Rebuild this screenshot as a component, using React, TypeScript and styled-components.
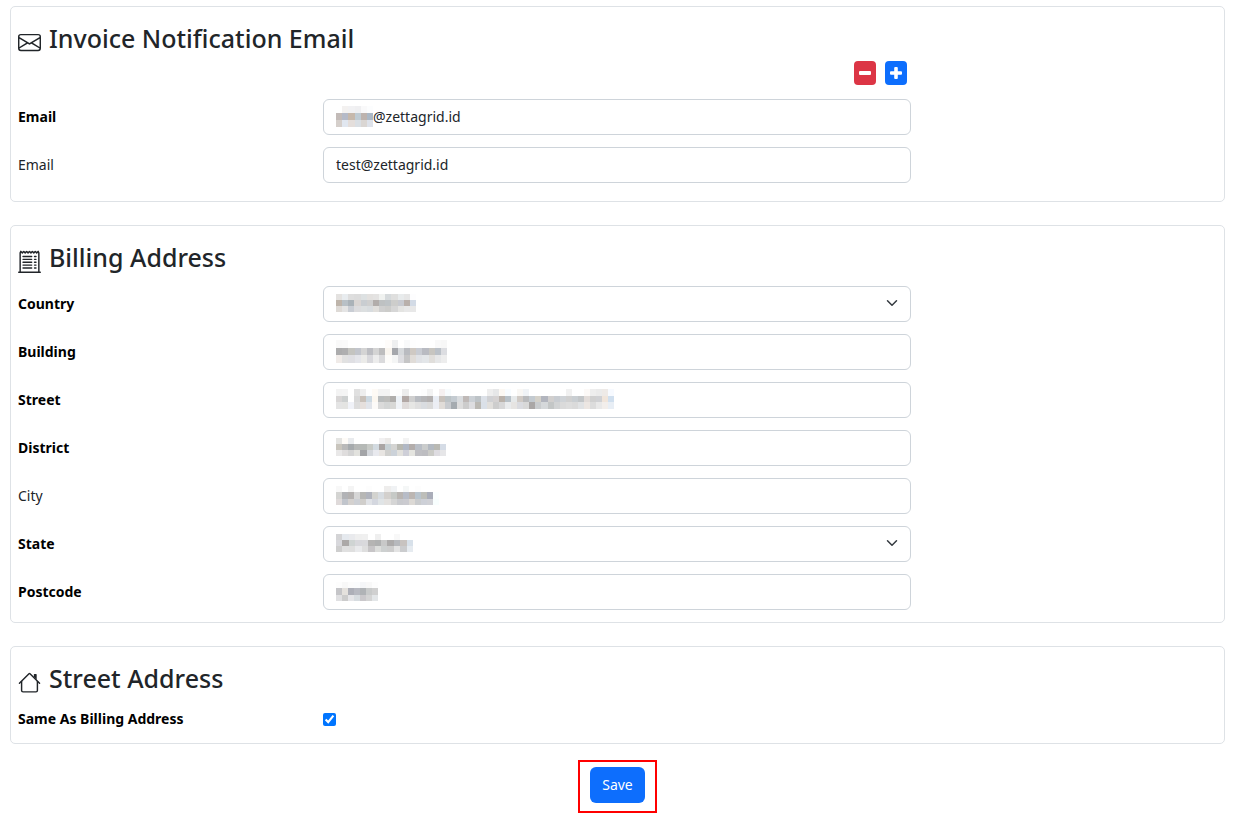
import React from "react";
import styled, { createGlobalStyle } from "styled-components";
import { BsEnvelope, BsReceiptCutoff } from "react-icons/bs";

const GlobalStyle = createGlobalStyle`
  *, *::before, *::after { box-sizing: border-box; }
  body {
    margin: 0;
    background: #fff;
    color: #212529;
    font-family: "Noto Sans", "Open Sans", sans-serif;
    font-size: 14px;
    line-height: 22px;
  }
`;

const Page = styled.form`
  display: flex;
  flex-direction: column;
  padding: 6px 11px 7px 10px;
`;

const Card = styled.section<{ $roomy?: boolean }>`
  padding: 14px 8px ${(p) => (p.$roomy ? 18 : 12)}px 7px;
  margin-bottom: 23px;
  border: 1px solid #dee2e6;
  border-radius: 5px;

  &:last-of-type { margin-bottom: 16px; }
`;

const Heading = styled.h3`
  display: flex;
  align-items: center;
  gap: 8px;
  margin: 0 0 6px;
  font-size: 25px;
  font-weight: 500;
  line-height: 34px;

  svg { flex: none; margin-top: 8px; }
`;

const Grid = styled.div`
  display: grid;
  grid-template-columns: repeat(12, minmax(0, 1fr));
  column-gap: 22px;
  align-items: center;
`;

const Actions = styled.div`
  grid-column: 4 / span 6;
  display: flex;
  justify-content: flex-end;
  gap: 9px;
  padding-right: 4px;
  margin-bottom: 8px;
`;

const IconButton = styled.button<{ $tone: string }>`
  display: flex;
  align-items: center;
  justify-content: center;
  width: 22px;
  height: 24px;
  padding: 0;
  border: 0;
  border-radius: 4px;
  background: ${(p) => p.$tone};
  color: #fff;
  cursor: pointer;
`;

const Fields = styled.div`
  display: flex;
  flex-direction: column;
  gap: 12px;
  padding-top: 6px;
`;

const Label = styled.label<{ $required?: boolean }>`
  grid-column: span 3;
  color: ${(p) => (p.$required ? "#000" : "#212529")};
  font-weight: ${(p) => (p.$required ? 700 : 400)};
`;

const Shell = styled.div`
  grid-column: span 6;
  display: flex;
  align-items: center;
  height: 36px;
  padding: 0 12px 2px;
  border: 1px solid #ced4da;
  border-radius: 6px;
  background: #fff;

  svg { flex: none; }
  &:focus-within { border-color: #86b7fe; }
`;

const TextInput = styled.input`
  flex: 1;
  min-width: 0;
  height: 100%;
  padding: 0;
  border: 0;
  outline: 0;
  background: transparent;
  color: inherit;
  font: inherit;
`;

const Select = styled.select`
  flex: 1;
  min-width: 0;
  height: 100%;
  padding: 0;
  border: 0;
  outline: 0;
  appearance: none;
  background: transparent;
  color: inherit;
  font: inherit;
`;

const CheckRow = styled(Grid)`
  min-height: 24px;
`;

const Checkbox = styled.input`
  width: 13px;
  height: 13px;
  margin: 0;
`;

const SaveFrame = styled.div`
  align-self: center;
  padding: 5px 10px 8px;
  border: 2px solid #f00;
`;

const SaveButton = styled.button`
  display: block;
  height: 36px;
  padding: 0 12px;
  border: 0;
  border-radius: 6px;
  background: #0d6efd;
  color: #fff;
  font: inherit;
  cursor: pointer;
`;

type MaskData = { width: number; height: number; rows: string[] };

/* Pixelated stand-in for a redacted value; each row lists its cell colours. */
const Mask = ({ width, height, rows }: MaskData) => {
  const cells = rows.map((r) => r.split(" "));
  const count = cells[0].length;
  return (
    <svg
      width={width}
      height={height}
      viewBox={`0 0 ${count} ${cells.length}`}
      preserveAspectRatio="none"
      shapeRendering="crispEdges"
      aria-hidden="true"
    >
      {cells.map((row, y) =>
        row.map((c, x) => <rect key={`${x}-${y}`} x={x} y={y} width="1" height="1" fill={`#${c}`} />)
      )}
    </svg>
  );
};

const Chevron = () => (
  <svg width="12" height="12" viewBox="0 0 16 16" fill="none" stroke="#343a40" strokeWidth="2" strokeLinecap="round" strokeLinejoin="round" aria-hidden="true">
    <path d="m2 5 6 6 6-6" />
  </svg>
);

const Minus = () => (
  <svg width="12" height="12" viewBox="0 0 12 12" fill="currentColor" aria-hidden="true">
    <rect x="0" y="4" width="12" height="4" rx="1" />
  </svg>
);

const Plus = () => (
  <svg width="12" height="12" viewBox="0 0 12 12" fill="currentColor" aria-hidden="true">
    <rect x="0" y="4.2" width="12" height="3.6" rx="1" />
    <rect x="4.2" y="0" width="3.6" height="12" rx="1" />
  </svg>
);

const House = () => (
  <svg width="23" height="23" viewBox="0 0 16 16" fill="currentColor" aria-hidden="true">
    <path fillRule="evenodd" d="M2 13.5V7h1v6.5a.5.5 0 0 0 .5.5h9a.5.5 0 0 0 .5-.5V7h1v6.5a1.5 1.5 0 0 1-1.5 1.5h-9A1.5 1.5 0 0 1 2 13.5zm11-11V6l-2-2V2.5a.5.5 0 0 1 .5-.5h1a.5.5 0 0 1 .5.5z" />
    <path fillRule="evenodd" d="M7.293 1.5a1 1 0 0 1 1.414 0l6.647 6.646a.5.5 0 0 1-.708.708L8 2.207 1.354 8.854a.5.5 0 1 1-.708-.708L7.293 1.5z" />
  </svg>
);

type FieldProps = {
  id: string;
  label: string;
  required?: boolean;
  select?: boolean;
  value?: string;
  mask?: MaskData;
};

const Field = ({ id, label, required, select, value = "", mask }: FieldProps) => (
  <Grid>
    <Label htmlFor={id} $required={required}>{label}</Label>
    <Shell>
      {mask && <Mask {...mask} />}
      {select ? <Select id={id} /> : <TextInput id={id} type="text" defaultValue={value} />}
      {select && <Chevron />}
    </Shell>
  </Grid>
);

const emailMask: MaskData = {
  width: 37,
  height: 21,
  rows: [
    "ffffff f3f1f0 f1f1f3 efeff1 f9f9fa fcfdfe",
    "c3bbb8 b5bac8 c6b8ab bfcbd3 bdb3ae abb8c6",
    "d5cfcb e1e7f0 e4dedb dadfe4 dad6d3 dee2ea",
  ],
};

const addressFields: FieldProps[] = [
  {
    id: "country", label: "Country", required: true, select: true,
    mask: {
      width: 80, height: 18,
      rows: [
        "e4e2e0 e8ecef dedede dcdcdc dde1e2 e3e1df e4e3e2 f0f2f0 d6dadc dfdfde e8ebec e6e6e6 fdfdfe",
        "beb4aa b8c0c6 aab2b8 d9d5d3 c9cdd1 cfcfcf b2adab bec1c2 bec3c6 cdcdcb c8cad0 b9b0ab d3dbe6",
        "dedad6 e4e4e4 c9cdd4 dcdcde dcdfe0 d8dcdf e1dfdc cfcfcf ccccca d6d6d6 e4e4e2 e8e8e8 e8e8e8",
      ],
    },
  },
  {
    id: "building", label: "Building", required: true,
    mask: {
      width: 111, height: 23,
      rows: [
        "f9f9f9 fafafa ffffff ffffff ffffff ffffff ffffff ffffff fefcfa eeeff0 ffffff f8f9fa fefefe ffffff ffffff ffffff f9f9f9 f7f7f7",
        "acacad afafb0 c4c4c0 c2c5cc d4d4d4 bcbdc2 d4d4d4 bdbdbe f9f5ef a5a7ac d5d8db b9bbc0 cfc9c3 c9ccd3 b9bbc2 c7c5c0 bbc1c8 dcdde1",
        "f0ebe8 e1e1e1 dfdfe3 e4e5ea ebebe9 d8d8dc ececec dadadc fdfcfa f4f5f5 dddde1 c5c5c6 e0dcd8 e0e2e6 e3e6e9 e0dedb e6e7e8 ededed",
      ],
    },
  },
  {
    id: "street", label: "Street", required: true,
    mask: {
      width: 278, height: 20,
      rows: [
        "f3f3f3 f4f4f4 ffffff e0e0e0 eeeeee fefefe fefaf5 f3f3f3 f3f3f3 fefefe fdfdfd ececec ffffff ffffff fdfdfd f2f2f2 ffffff f5f0f0 f7fbfd ffffff ffffff ffffff ffffff ffffff ffffff eeeeee e6e7e8 fcf8f3 f8fcff ffffff f9f7f4 f0f3f6 ffffff ffffff ffffff ffffff ffffff ffffff f1f1f1 ffffff ffffff fcf9f7 eeeeee ebebeb eeeae7 f7faff",
        "d8d6d6 cdd0d0 ffffff d8d8d8 c9c1ba cdd9e2 fcf7f0 b9bcbd bdbdbb b0aeac edf2f7 b2a8a5 cfcfcf b9bcc1 b6b6b8 b4b1b1 e9edf4 c8c2bc bcc3c6 c4cbd1 d9dcdf bfb9b7 cbd0d5 bdc3c7 dce1e8 d0d1d4 d5d2d2 bab2ab b8c1c8 e6e9ea d0cac5 b9babc c3cad0 d4d1c9 b2b5be d1cfce c8ccd1 cfd3d7 d0d0d0 c9ced2 c3c6c8 e2dcd9 d0d0d0 d0d1d4 f0e5db d0dfee",
        "e4e4e4 e4e4e2 f0f2f8 dddddd e5dfdc e1e4ea fcfaf8 dadada d3d5d5 d8d8d6 f0f3f7 dfdbda e6e6e4 dfdfdf d9dce0 dadada eceef4 e0dcd8 c8cbcf a5abb0 dddddd cccccc dddde0 bbb9b4 dae0e8 e1dfdc cdcdcd d7d7d8 e9ebed e6e4e2 dadbe0 d8d8d8 aaa7a6 c9ccce d5d8da c3c6c6 d1d3d4 dadada dddddd dadada e0e2e4 ece6e2 dcdcdc e8e8e8 f2eeeb e8eef5",
      ],
    },
  },
  {
    id: "district", label: "District", required: true,
    mask: {
      width: 110, height: 18,
      rows: [
        "e4e4e2 fefbf7 e9ebee ffffff ffffff ffffff ffffff f1f0f1 ebe9e7 ffffff ffffff f3f3f3 ffffff ffffff ffffff ffffff ffffff ffffff",
        "c9c5bd b9b9b9 a6aaad b6b8b7 b5b9b6 c7cac6 d2dae0 aaa5a4 c7d0d4 d4d4d2 b8b8b1 b1b8c5 b3adab b9bec6 cacccc b3b9c1 b9b9b3 d5dce6",
        "e9e8e8 dfdddd d4d4d4 e2e2de a3a4a7 d4d7dc e8e9ee e8e5e2 d0d0ce ccd2d9 e2e1dd cecfd8 e5e5e0 bfbfc3 bdbdc1 cbcbc7 dedce1 e6e6e8",
      ],
    },
  },
  {
    id: "city", label: "City",
    mask: {
      width: 103, height: 19,
      rows: [
        "f8f8f8 ffffff f4f4f4 ffffff ffffff fdfdfd ffffff ffffff eeedec f0f2f4 ffffff f5f7f7 ffffff fdfdfd ffffff ffffff ffffff",
        "d4d4d2 b2b3b6 b4b1b0 d6d6d6 b7b7b5 b1b4bd d3d3cf d7dce1 d3d0cd c6c9c6 b9b5b2 b7bcc7 bcb6b2 b9c4cd bdbeb9 a9adb9 fbffff",
        "dfdada c1c5cc d4d1cf cdd0d5 d0cecb e1e3e7 d4d7df e0e4e6 e3e1df d5d5d5 c9cace cbcbd0 dcd9d5 caccce cdd0d7 d0d1d6 f8fefe",
      ],
    },
  },
  {
    id: "state", label: "State", required: true, select: true,
    mask: {
      width: 77, height: 18,
      rows: [
        "d4d4d6 e5e9ee e9eaed efefef f0f0f0 ffffff efefef ffffff ffffff f8f8f8 ffffff ffffff",
        "d8d8dc aca9a8 cfd4d3 d8d8dc d9d9dc b5b4b3 b0b1b1 c8c8c8 adabab b7b9bd c8c3c0 d8e1ea",
        "cecece e0e0e0 dfdfdf e9eaec dedede c7c5c7 dcdddb cdd0d0 cdcdcd e3e3e3 cbccce e6ebf0",
      ],
    },
  },
  {
    id: "postcode", label: "Postcode", required: true,
    mask: {
      width: 42, height: 19,
      rows: [
        "fdfdfd f8f8f8 fcfcfc fbfcfd f5f6f8 f8f8f8 fdfdfd",
        "c5c5c8 e4e1dd adafb8 b7b9c1 b0b3b6 c8caca d0d0d0",
        "e0e0e2 cccccc e5e5e8 d7dce0 cac8cb d4d4d4 e3e6e8",
      ],
    },
  },
];

export default function App() {
  return (
    <>
      <GlobalStyle />
      <Page onSubmit={(e) => e.preventDefault()}>
        <Card $roomy>
          <Heading><BsEnvelope size={23} />Invoice Notification Email</Heading>
          <Grid>
            <Actions>
              <IconButton type="button" $tone="#dc3545" aria-label="Remove email"><Minus /></IconButton>
              <IconButton type="button" $tone="#0d6efd" aria-label="Add email"><Plus /></IconButton>
            </Actions>
          </Grid>
          <Fields>
            <Field id="email-primary" label="Email" required value="@zettagrid.id" mask={emailMask} />
            <Field id="email-secondary" label="Email" value="test@zettagrid.id" />
          </Fields>
        </Card>

        <Card>
          <Heading><BsReceiptCutoff size={23} />Billing Address</Heading>
          <Fields>
            {addressFields.map((field) => <Field key={field.id} {...field} />)}
          </Fields>
        </Card>

        <Card>
          <Heading><House />Street Address</Heading>
          <Fields>
            <CheckRow>
              <Label htmlFor="same-address" $required>Same As Billing Address</Label>
              <Checkbox id="same-address" type="checkbox" defaultChecked />
            </CheckRow>
          </Fields>
        </Card>

        <SaveFrame><SaveButton type="submit">Save</SaveButton></SaveFrame>
      </Page>
    </>
  );
}
